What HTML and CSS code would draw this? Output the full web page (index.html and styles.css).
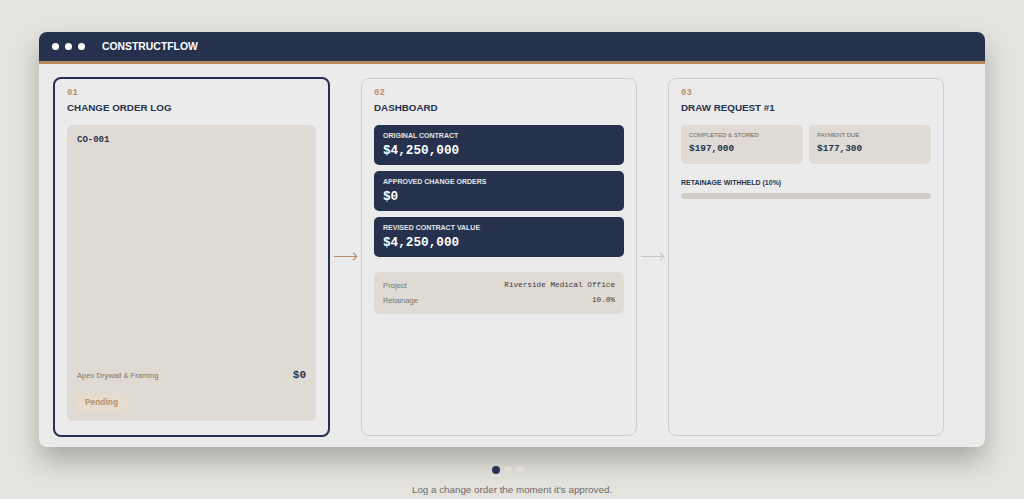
FILE: index.html
```html
<!DOCTYPE html>
<html lang="en">
<head>
    <meta charset="UTF-8">
    <meta name="viewport" content="width=device-width, initial-scale=1.0">
    <title>ConstructFlow</title>
    <link rel="stylesheet" href="styles.css">
</head>
<body>
    <div class="window">
        <div class="titlebar">
            <span class="dot"></span>
            <span class="dot"></span>
            <span class="dot"></span>
            <span class="brand">CONSTRUCTFLOW</span>
        </div>

        <div class="stage">
            <!-- step 1 -->
            <div class="panel active">
                <div class="step">01</div>
                <h3>CHANGE ORDER LOG</h3>
                <div class="co-card">
                    <div class="co-id">CO-001</div>
                    <div class="co-bottom">
                        <div class="co-row">
                            <span class="co-vendor">Apex Drywall &amp; Framing</span>
                            <span class="co-amount">$0</span>
                        </div>
                        <span class="badge">Pending</span>
                    </div>
                </div>
            </div>

            <div class="arrow on">
                <svg width="24" height="9" viewBox="0 0 24 9"><path d="M0 4.5H23M19 1L23 4.5L19 8" fill="none" stroke="currentColor" stroke-width="1.1"/></svg>
            </div>

            <!-- step 2 -->
            <div class="panel">
                <div class="step">02</div>
                <h3>DASHBOARD</h3>
                <div class="stat">
                    <div class="stat-label">ORIGINAL CONTRACT</div>
                    <div class="stat-value">$4,250,000</div>
                </div>
                <div class="stat">
                    <div class="stat-label">APPROVED CHANGE ORDERS</div>
                    <div class="stat-value">$0</div>
                </div>
                <div class="stat">
                    <div class="stat-label">REVISED CONTRACT VALUE</div>
                    <div class="stat-value">$4,250,000</div>
                </div>
                <div class="info">
                    <div class="info-row">
                        <span>Project</span>
                        <span class="mono">Riverside Medical Office</span>
                    </div>
                    <div class="info-row">
                        <span>Retainage</span>
                        <span class="mono">10.0%</span>
                    </div>
                </div>
            </div>

            <div class="arrow">
                <svg width="24" height="9" viewBox="0 0 24 9"><path d="M0 4.5H23M19 1L23 4.5L19 8" fill="none" stroke="currentColor" stroke-width="1.1"/></svg>
            </div>

            <!-- step 3 -->
            <div class="panel">
                <div class="step">03</div>
                <h3>DRAW REQUEST #1</h3>
                <div class="draw-grid">
                    <div class="draw-box">
                        <div class="draw-label">COMPLETED &amp; STORED</div>
                        <div class="draw-value">$197,000</div>
                    </div>
                    <div class="draw-box">
                        <div class="draw-label">PAYMENT DUE</div>
                        <div class="draw-value">$177,300</div>
                    </div>
                </div>
                <div class="ret-label">RETAINAGE WITHHELD (10%)</div>
                <div class="ret-bar"><div class="ret-fill" style="width: 0%"></div></div>
            </div>
        </div>
    </div>

    <div class="pager">
        <span class="pdot current"></span>
        <span class="pdot"></span>
        <span class="pdot"></span>
    </div>
    <p class="caption">Log a change order the moment it's approved.</p>
</body>
</html>
```

FILE: styles.css
```css
body {
    margin: 0;
    background-color: #e5e3de;
    font-family: "Liberation Sans", Arial, sans-serif;
    color: #26324d;
}
.window {
    margin: 32px 39px 0 39px;
    height: 415px;
    background: #ebebeb;
    border-radius: 8px;
    overflow: hidden;
    box-shadow: 0 14px 26px rgba(0, 0, 0, 0.25);
}
.titlebar {
    height: 29px;
    background: #26324d;
    border-bottom: 3px solid #b58a5c;
    display: flex;
    align-items: center;
    padding-left: 13px;
    gap: 6px;
}
.dot {
    width: 7px;
    height: 7px;
    border-radius: 50%;
    background: #fff;
}
.brand {
    margin-left: 11px;
    color: #fff;
    font-weight: bold;
    font-size: 10.4px;
}
.stage {
    display: flex;
    align-items: flex-start;
    padding: 13px 0 0 14px;
}
.panel {
    box-sizing: border-box;
    width: 276px;
    height: 358px;
    margin-top: 1px;
    border: 1px solid #cfcdc8;
    border-radius: 8px;
    padding: 9px 12px 14px 12px;
    display: flex;
    flex-direction: column;
}
.panel.active {
    width: 277px;
    height: 360px;
    margin-top: 0;
    border: 2px solid #26324d;
}
.step {
    font-family: "Liberation Mono", monospace;
    font-weight: bold;
    font-size: 9px;
    color: #b8916a;
    line-height: 11px;
}
h3 {
    margin: 3px 0 11px 0;
    font-size: 9.8px;
    line-height: 12px;
    color: #26324d;
}
.arrow {
    width: 31px;
    display: flex;
    justify-content: center;
    margin-top: 175px;
    color: #c9c6c0;
}
.arrow.on {
    color: #b8916a;
}
.co-card {
    flex: 1;
    background: #dfdbd4;
    border-radius: 6px;
    padding: 10px 10px 10px 10px;
    display: flex;
    flex-direction: column;
    justify-content: space-between;
}
.co-id {
    font-family: "Liberation Mono", monospace;
    font-weight: bold;
    font-size: 9px;
}
.co-row {
    display: flex;
    justify-content: space-between;
    align-items: center;
    margin-bottom: 10px;
}
.co-vendor {
    font-size: 7.6px;
    color: #77746f;
}
.co-amount {
    font-family: "Liberation Mono", monospace;
    font-weight: bold;
    font-size: 11px;
}
.badge {
    display: inline-block;
    margin-left: -1px;
    padding: 4px 9px;
    line-height: 9px;
    border-radius: 4px;
    background: #e6dccd;
    color: #b8916a;
    font-weight: bold;
    font-size: 8.4px;
}
.stat {
    background: #26324d;
    color: #fff;
    border-radius: 5px;
    padding: 6px 9px 6px 9px;
    margin-bottom: 6px;
}
.stat-label {
    font-size: 7px;
    font-weight: bold;
    line-height: 9px;
    color: #e4e6ea;
}
.stat-value {
    font-family: "Liberation Mono", monospace;
    font-weight: bold;
    font-size: 12.7px;
    line-height: 17px;
    margin-top: 2px;
}
.info {
    margin-top: 9px;
    background: #dfdbd4;
    border-radius: 6px;
    padding: 6px 9px;
}
.info-row {
    display: flex;
    justify-content: space-between;
    font-size: 7.7px;
    line-height: 15px;
    color: #77746f;
}
.mono {
    font-family: "Liberation Mono", monospace;
    color: #3a3a3a;
}
.draw-grid {
    display: grid;
    grid-template-columns: 1fr 1fr;
    gap: 6px;
}
.draw-box {
    background: #dfdbd4;
    border-radius: 5px;
    padding: 6px 8px 8px 8px;
}
.draw-label {
    font-size: 6px;
    line-height: 8px;
    color: #66635e;
}
.draw-value {
    font-family: "Liberation Mono", monospace;
    font-weight: bold;
    font-size: 9.4px;
    line-height: 14px;
    margin-top: 3px;
    color: #26324d;
}
.ret-label {
    margin-top: 14px;
    font-size: 7px;
    font-weight: bold;
    line-height: 9px;
}
.ret-bar {
    margin-top: 6px;
    height: 6px;
    border-radius: 3px;
    background: #d0cdc6;
    overflow: hidden;
}
.ret-fill {
    height: 100%;
    background: #b8916a;
}
.pager {
    display: flex;
    justify-content: center;
    gap: 4px;
    margin-top: 19px;
    padding-right: 8px;
}
.pdot {
    width: 8px;
    height: 8px;
    border-radius: 50%;
    background: #e0ddd7;
}
.pdot.current {
    background: #26324d;
}
.caption {
    margin: 10px 0 0 0;
    text-align: center;
    font-size: 9.8px;
    color: #6b6a66;
}
```
